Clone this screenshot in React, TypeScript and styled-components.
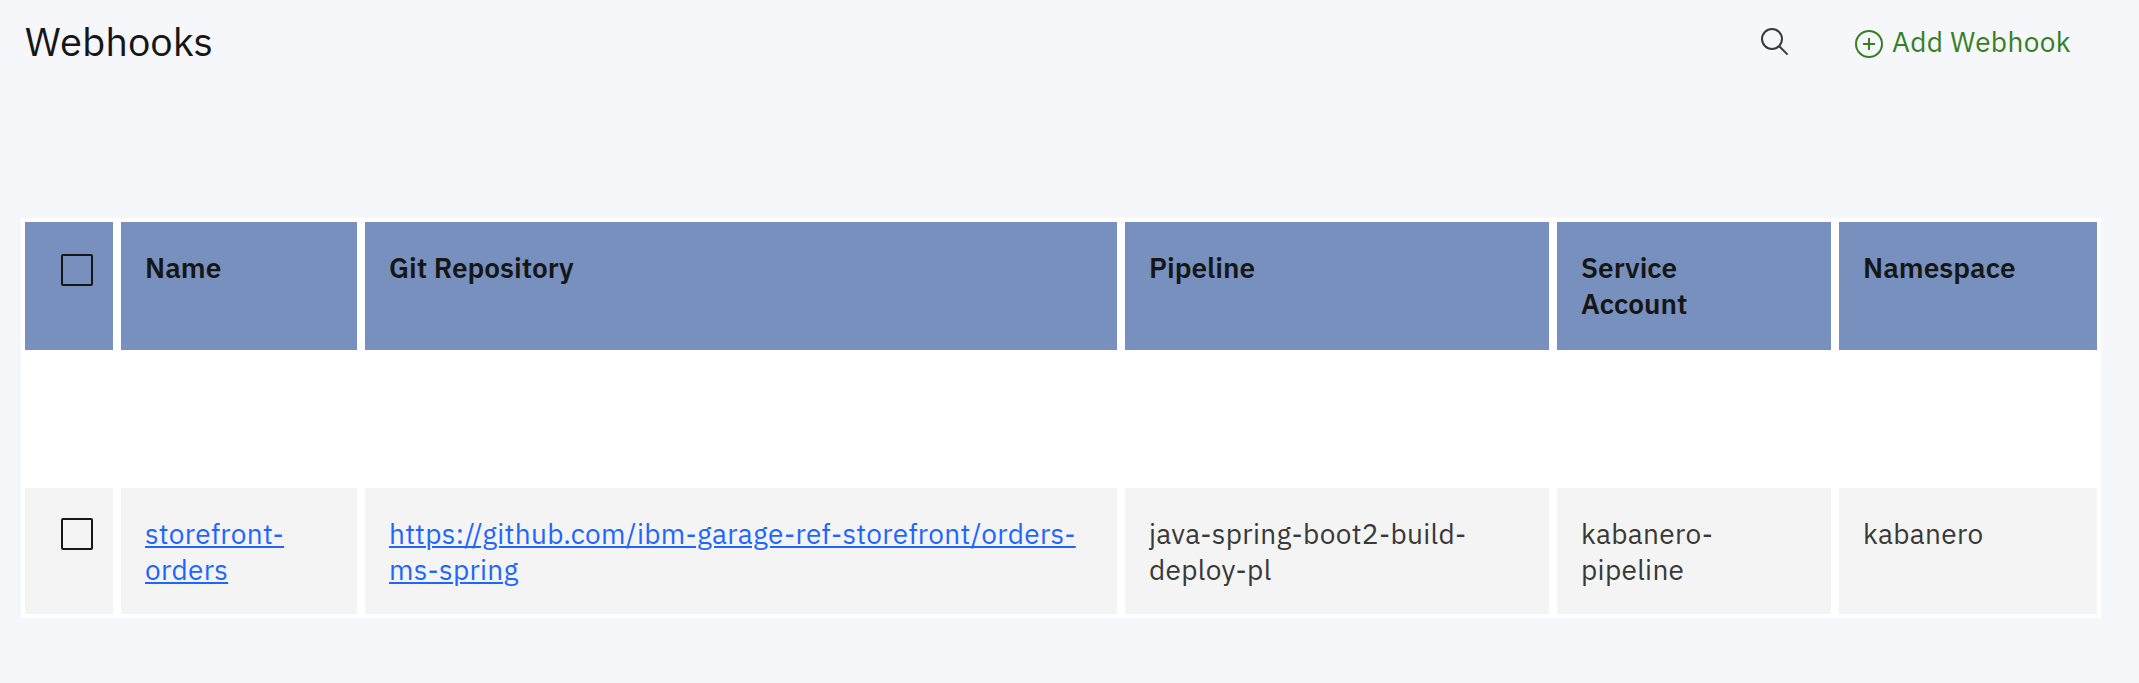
import React from "react";
import styled, { createGlobalStyle } from "styled-components";

const GlobalStyle = createGlobalStyle`
  * { box-sizing: border-box; }
  body {
    margin: 0;
    background: #f5f7fb;
    font-family: "IBM Plex Sans", Roboto, "Liberation Sans", sans-serif;
    color: #161616;
  }
`;

const Page = styled.main`
  width: 2139px;
  height: 683px;
  padding: 0 38px 0 21px;
  background: #f5f7fb;
  overflow: hidden;
`;

const Header = styled.header`
  height: 218px;
  padding: 12px 31px 0 4px;
  display: flex;
  align-items: flex-start;
`;

const Title = styled.h1`
  margin: 3px auto 0 0;
  font-size: 40px;
  line-height: 52px;
  font-weight: 400;
`;

const IconButton = styled.button`
  display: flex;
  margin: 12px 64px 0 0;
  padding: 0;
  border: 0;
  background: none;
  color: #393939;
`;

const AddButton = styled.button`
  display: flex;
  align-items: flex-start;
  gap: 7px;
  margin: 0;
  padding: 12px 0 0;
  width: 217px;
  border: 0;
  background: none;
  color: #358023;
  font: inherit;
  font-size: 28px;
  line-height: 36px;
  letter-spacing: 0.32px;
  white-space: nowrap;

  svg { margin: 4px 0 0; flex: none; }
`;

const Table = styled.div`
  display: flex;
  flex-direction: column;
  gap: 138px;
  padding: 4px;
  background: #ffffff;
`;

const Row = styled.div<{ $head?: boolean }>`
  display: grid;
  grid-template-columns: 88px 236px 752px 424px 274px 258px;
  gap: 8px;
  height: ${(p) => (p.$head ? 128 : 126)}px;
  color: ${(p) => (p.$head ? "#161616" : "#393939")};
  font-weight: ${(p) => (p.$head ? 600 : 400)};
  letter-spacing: ${(p) => (p.$head ? "normal" : "0.32px")};

  > div {
    background: ${(p) => (p.$head ? "#7890bd" : "#f4f4f4")};
    padding-top: 28px;
  }
`;

const Cell = styled.div`
  padding-left: 24px;
  font-size: 28px;
  line-height: 36px;
`;

const CheckCell = styled.div`
  padding-left: 36px;
`;

const Checkbox = styled.span<{ $offset: number }>`
  display: block;
  width: 32px;
  height: 32px;
  margin-top: ${(p) => p.$offset}px;
  border: 2px solid #161616;
  border-radius: 2px;
`;

const Line = styled.span`
  display: block;
  white-space: nowrap;
`;

const Link = styled.a`
  color: #1f66ff;
  text-decoration: underline;
  text-decoration-thickness: 2px;
  text-underline-offset: 2px;
`;

const columns: string[][] = [
  ["Name"],
  ["Git Repository"],
  ["Pipeline"],
  ["Service", "Account"],
  ["Namespace"],
];

const values: { link?: boolean; lines: string[] }[] = [
  { link: true, lines: ["storefront-", "orders"] },
  { link: true, lines: ["https://github.com/ibm-garage-ref-storefront/orders-", "ms-spring"] },
  { lines: ["java-spring-boot2-build-", "deploy-pl"] },
  { lines: ["kabanero-", "pipeline"] },
  { lines: ["kabanero"] },
];

const Lines = ({ lines }: { lines: string[] }) => (
  <>
    {lines.map((text) => (
      <Line key={text}>{text}</Line>
    ))}
  </>
);

export default function App() {
  return (
    <>
      <GlobalStyle />
      <Page>
        <Header>
          <Title>Webhooks</Title>
          <IconButton aria-label="Search">
            <svg width="32" height="32" viewBox="0 0 32 32" fill="none" stroke="currentColor" strokeWidth="2">
              <circle cx="15" cy="15" r="10" />
              <path d="M22 22 30.6 30.6" />
            </svg>
          </IconButton>
          <AddButton>
            <svg width="32" height="32" viewBox="0 0 32 32" fill="none" stroke="currentColor" strokeWidth="2">
              <circle cx="16" cy="16" r="13" />
              <path d="M16 10v12M10 16h12" />
            </svg>
            <span>Add Webhook</span>
          </AddButton>
        </Header>
        <Table>
          <Row $head>
            <CheckCell><Checkbox $offset={4} /></CheckCell>
            {columns.map((lines) => (
              <Cell key={lines[0]}><Lines lines={lines} /></Cell>
            ))}
          </Row>
          <Row>
            <CheckCell><Checkbox $offset={2} /></CheckCell>
            {values.map(({ link, lines }) => (
              <Cell key={lines[0]}>
                {link ? <Link><Lines lines={lines} /></Link> : <Lines lines={lines} />}
              </Cell>
            ))}
          </Row>
        </Table>
      </Page>
    </>
  );
}
